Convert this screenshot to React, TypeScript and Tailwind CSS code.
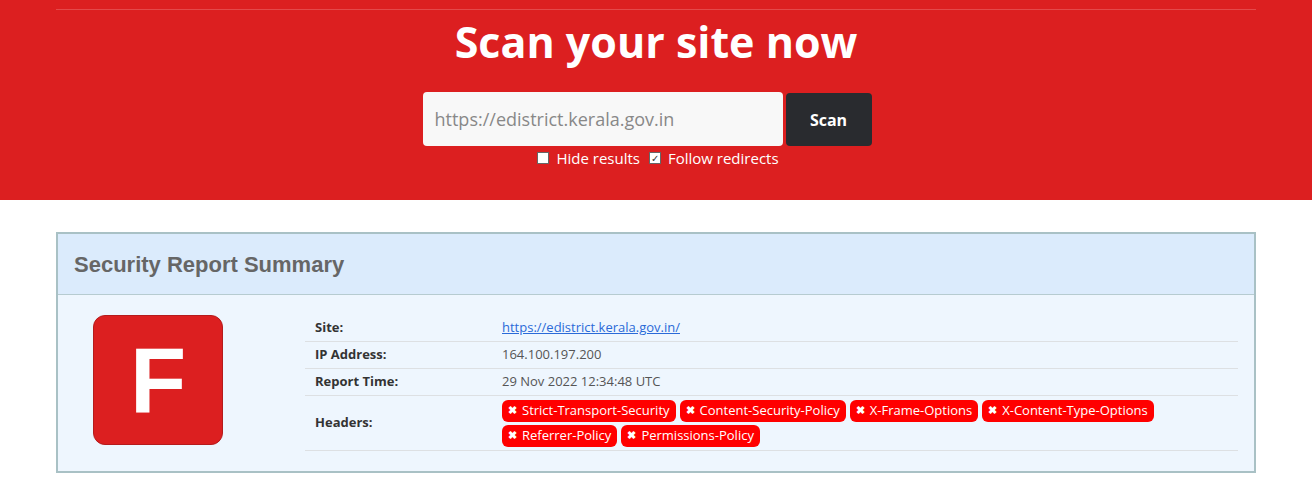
import { Fragment } from "react";

const headers = [
  "Strict-Transport-Security",
  "Content-Security-Policy",
  "X-Frame-Options",
  "X-Content-Type-Options",
  "Referrer-Policy",
  "Permissions-Policy",
];

function Badge({ label }: { label: string }) {
  return (
    <span className="inline-flex h-[22px] items-center gap-[5px] rounded-[6px] bg-[#ff0000] px-[6px] text-[13px] text-white">
      <span className="text-[11px] font-bold">✖</span>
      {label}
    </span>
  );
}

export default function App() {
  const rows: { label: string; value: React.ReactNode; tall?: boolean }[] = [
    {
      label: "Site:",
      value: (
        <a href="#" className="text-[#2a6ad8] underline">
          https://edistrict.kerala.gov.in/
        </a>
      ),
    },
    { label: "IP Address:", value: "164.100.197.200" },
    { label: "Report Time:", value: "29 Nov 2022 12:34:48 UTC" },
    {
      label: "Headers:",
      tall: true,
      value: (
        <div className="flex flex-wrap gap-x-[4px] gap-y-[3px]">
          {headers.map((h) => (
            <Badge key={h} label={h} />
          ))}
        </div>
      ),
    },
  ];

  return (
    <div className="min-h-screen bg-white font-['Open_Sans',sans-serif]">
      {/* hero */}
      <div className="h-[200px] bg-[#dc1f20] pt-[9px]">
        <div className="mx-auto w-[1200px] border-t border-[#e4494a]">
          <h1 className="mt-[4px] text-center text-[43px] leading-[56px] font-bold text-white">
            Scan your site now
          </h1>
          <div className="mt-[22px] flex justify-center">
            <div className="ml-[-18px] flex gap-[3px]">
              <div className="flex h-[54px] w-[360px] items-center rounded-[4px] bg-[#f8f8f8] px-[12px] text-[18px] text-[#888]">
                https://edistrict.kerala.gov.in
              </div>
              <button className="mt-[1px] h-[53px] w-[86px] rounded-[4px] bg-[#292b2f] text-[16px] font-bold text-white">
                Scan
              </button>
            </div>
          </div>
          <div className="mt-[1px] flex items-center justify-center text-[15px] text-white">
            <div className="ml-[4px] flex items-center">
              <span className="h-[12px] w-[12px] border border-[#666] bg-white" />
              <span className="ml-[7px]">Hide results</span>
              <span className="ml-[9px] flex h-[12px] w-[12px] items-center justify-center border border-[#666] bg-white text-[10px] leading-none text-[#333]">
                ✓
              </span>
              <span className="ml-[7px]">Follow redirects</span>
            </div>
          </div>
        </div>
      </div>

      {/* report card */}
      <div className="mx-auto mt-[32px] w-[1200px] border-2 border-[#a9c1c5] bg-[#eef6fe]">
        <div className="flex h-[61px] items-center border-b border-[#b6cbd0] bg-[#dbebfc] px-[16px]">
          <h2 className="font-['Liberation_Sans',Arial,sans-serif] text-[22px] font-bold text-[#666]">
            Security Report Summary
          </h2>
        </div>
        <div className="flex pt-[20px] pb-[20px]">
          <div className="w-[247px] pl-[35px]">
            <div className="flex h-[130px] w-[130px] items-center justify-center rounded-[12px] border border-[#b51b1c] bg-[#dc1f20] font-['Liberation_Sans',Arial,sans-serif] text-[92px] font-bold text-white">
              F
            </div>
          </div>
          <div className="w-[933px] text-[13px]">
            <div className="grid grid-cols-[197px_1fr]">
              {rows.map((r) => (
                <Fragment key={r.label}>
                  <div
                    className={`flex items-center border-b border-[#dde0e3] pl-[10px] font-bold text-[#333] ${
                      r.tall ? "h-[55px]" : "h-[27px]"
                    }`}
                  >
                    {r.label}
                  </div>
                  <div
                    className={`flex items-center border-b border-[#dde0e3] text-[#555] ${
                      r.tall ? "h-[55px]" : "h-[27px]"
                    }`}
                  >
                    {r.value}
                  </div>
                </Fragment>
              ))}
            </div>
          </div>
        </div>
      </div>
    </div>
  );
}
